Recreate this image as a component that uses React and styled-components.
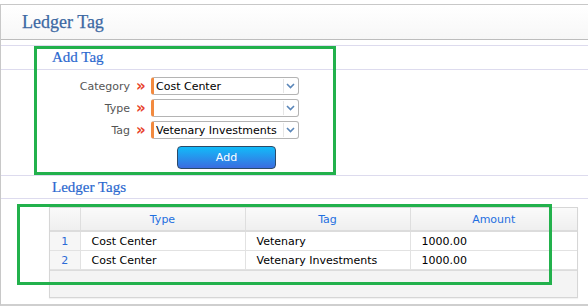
import React from "react";
import styled, { createGlobalStyle } from "styled-components";

const GlobalStyle = createGlobalStyle`
  html, body {
    margin: 0;
    padding: 0;
    background: #ffffff;
  }
  body {
    font-family: "DejaVu Sans", Verdana, sans-serif;
    font-size: 11px;
    color: #000;
  }
`;

const Wrapper = styled.div`
  position: relative;
  width: 588px;
  height: 307px;
  overflow: hidden;
`;

const Page = styled.div`
  margin-top: 4px;
  border-top: 1px solid #c8c8c8;
  border-left: 1px solid #c8c8c8;
  border-bottom: 2px solid #cfcfcf;
  padding-bottom: 6px;
`;

const TitleBar = styled.div`
  height: 34px;
  display: flex;
  align-items: center;
  padding-left: 21px;
  background: linear-gradient(#ffffff, #f7f7f7);
  border-bottom: 1px solid #bdbdbd;
`;

const Title = styled.h1`
  margin: 0;
  font-family: "Liberation Serif", "Times New Roman", serif;
  font-weight: normal;
  font-size: 18px;
  color: #3d69a3;
  -webkit-text-stroke: 0.25px #3d69a3;
`;

const SectionHead = styled.div`
  height: ${(p) => p.h || 22}px;
  margin-top: ${(p) => p.gap || 0}px;
  display: flex;
  align-items: center;
  padding-left: 51px;
  border-top: 1px solid #dddbee;
  border-bottom: 1px solid #dddbee;
  font-family: "Liberation Serif", "Times New Roman", serif;
  font-size: 15px;
  color: #2c69cf;
  -webkit-text-stroke: 0.2px #2c69cf;
`;

const Form = styled.div`
  display: grid;
  grid-template-columns: 129px 21px 148px;
  grid-template-rows: repeat(3, 18px) auto;
  row-gap: 4px;
  padding: 7px 0 6px;
`;

const Label = styled.div`
  display: flex;
  align-items: center;
  justify-content: flex-end;
  color: #555555;
`;

const Marker = styled.div`
  display: flex;
  align-items: center;
  padding-left: 6px;
  font-weight: bold;
  font-size: 15px;
  color: #e8432b;
`;

const SelectBox = styled.div`
  display: flex;
  align-items: center;
  box-sizing: border-box;
  height: 18px;
  border: 1px solid #b4b4b4;
  border-left: 3px solid #f28a3f;
  border-radius: 3px;
  background: #ffffff;
  padding-left: 2px;
  white-space: nowrap;
  overflow: hidden;
`;

const SelectText = styled.span`
  flex: 1;
  overflow: hidden;
`;

const Arrow = styled.span`
  width: 13px;
  height: 14px;
  display: flex;
  align-items: center;
  justify-content: center;
  border-left: 1px solid #e6e6e6;
  margin-right: 1px;
`;

const AddButton = styled.button`
  grid-column: 3;
  justify-self: center;
  margin-top: 3px;
  margin-left: 3px;
  width: 99px;
  height: 23px;
  border: 1px solid #2c4a68;
  border-radius: 4px;
  background: linear-gradient(#12bbf9, #3b6ce0);
  color: #ffffff;
  font-family: "DejaVu Sans", Verdana, sans-serif;
  font-size: 11px;
  padding: 0;
`;

const GridWrap = styled.div`
  margin: 8px 0 0 48px;
  width: 527px;
  border: 1px solid #d6d6d6;
  box-shadow: 0 1px 1px rgba(0, 0, 0, 0.05);
  background: #f3f3f3;
`;

const Table = styled.table`
  width: 100%;
  border-collapse: collapse;
  table-layout: fixed;
`;

const HeadCell = styled.th`
  height: 22px;
  padding: 0;
  font-weight: normal;
  color: #1f6fe0;
  text-align: center;
  background: linear-gradient(#fafafa, #efefef);
  border-left: 1px solid #dedede;
  border-bottom: 2px solid #dcdcdc;
  &:first-child {
    border-left: none;
  }
`;

const Cell = styled.td`
  height: 18px;
  padding: 0 0 0 ${(p) => (p.num ? 0 : 11)}px;
  text-align: ${(p) => (p.num ? "center" : "left")};
  color: ${(p) => (p.num ? "#2c6bd6" : "#000")};
  background: ${(p) => (p.num ? "#f6f6f6" : "#ffffff")};
  border-left: 1px solid #e2e2e2;
  border-bottom: 1px solid #e2e2e2;
  white-space: nowrap;
  &:first-child {
    border-left: none;
  }
`;

const Footer = styled.div`
  height: 26px;
  border-top: 1px solid #dcdcdc;
  background: #f4f4f4;
`;

const Highlight = styled.div`
  position: absolute;
  left: ${(p) => p.x}px;
  top: ${(p) => p.y}px;
  width: ${(p) => p.w}px;
  height: ${(p) => p.h}px;
  box-sizing: border-box;
  border: 3px solid #22b14c;
  pointer-events: none;
`;

const ChevronDown = () => (
  <svg width="9" height="6" viewBox="0 0 9 6">
    <path d="M1 1 L4.5 4.5 L8 1" fill="none" stroke="#5a86b9" strokeWidth="1.6" />
  </svg>
);

const fields = [
  { label: "Category", value: "Cost Center" },
  { label: "Type", value: "" },
  { label: "Tag", value: "Vetenary Investments" },
];

const rows = [
  { type: "Cost Center", tag: "Vetenary", amount: "1000.00" },
  { type: "Cost Center", tag: "Vetenary Investments", amount: "1000.00" },
];

const App = () => (
  <Wrapper>
    <GlobalStyle />
    <Page>
      <TitleBar>
        <Title>Ledger Tag</Title>
      </TitleBar>
      <SectionHead gap={5} h={23}>
        Add Tag
      </SectionHead>
      <Form>
        {fields.map((f) => (
          <React.Fragment key={f.label}>
            <Label>{f.label}</Label>
            <Marker>»</Marker>
            <SelectBox>
              <SelectText>{f.value}</SelectText>
              <Arrow>
                <ChevronDown />
              </Arrow>
            </SelectBox>
          </React.Fragment>
        ))}
        <AddButton>Add</AddButton>
      </Form>
      <SectionHead>Ledger Tags</SectionHead>
      <GridWrap>
        <Table>
          <colgroup>
            <col style={{ width: 30 }} />
            <col style={{ width: 165 }} />
            <col style={{ width: 165 }} />
            <col />
          </colgroup>
          <thead>
            <tr>
              <HeadCell />
              <HeadCell>Type</HeadCell>
              <HeadCell>Tag</HeadCell>
              <HeadCell>Amount</HeadCell>
            </tr>
          </thead>
          <tbody>
            {rows.map((r, i) => (
              <tr key={i}>
                <Cell num>{i + 1}</Cell>
                <Cell>{r.type}</Cell>
                <Cell>{r.tag}</Cell>
                <Cell>{r.amount}</Cell>
              </tr>
            ))}
          </tbody>
        </Table>
        <Footer />
      </GridWrap>
    </Page>
    <Highlight x={34} y={46} w={302} h={129} />
    <Highlight x={17} y={204} w={535} h={81} />
  </Wrapper>
);

export default App;
